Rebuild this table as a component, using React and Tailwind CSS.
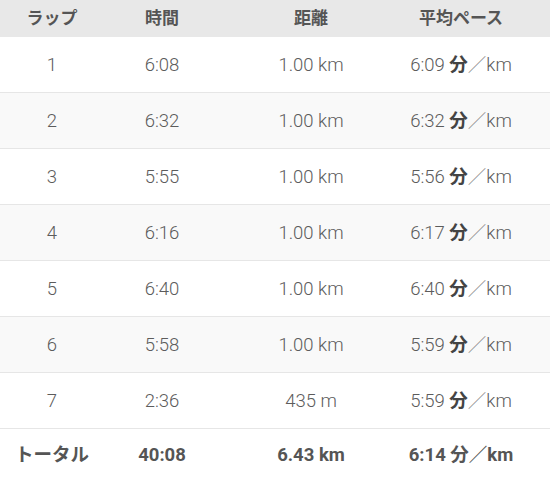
import React from "react";

const rows = [
  ["1", "6:08", "1.00 km", "6:09"],
  ["2", "6:32", "1.00 km", "6:32"],
  ["3", "5:55", "1.00 km", "5:56"],
  ["4", "6:16", "1.00 km", "6:17"],
  ["5", "6:40", "1.00 km", "6:40"],
  ["6", "5:58", "1.00 km", "5:59"],
  ["7", "2:36", "435 m", "5:59"],
];

const grid = "grid grid-cols-[104px_116px_182px_118px_1fr] items-center text-center";
const jp = { fontFamily: "Roboto, 'Noto Sans CJK JP', sans-serif" };

export default function App() {
  return (
    <div className="w-[550px] h-[480px] bg-white overflow-hidden text-[#555]" style={jp}>
      <div className={`${grid} h-[37px] bg-[#e8e8e8] font-bold text-[17px] text-[#555]`}>
        <div>ラップ</div>
        <div>時間</div>
        <div>距離</div>
        <div>平均ペース</div>
        <div />
      </div>
      {rows.map((r, i) => (
        <div
          key={i}
          className={`${grid} h-[56px] pt-[3px] border-b border-[#e6e6e6] text-[18.5px] font-light text-[#5c5c5c] ${i % 2 === 1 ? "bg-[#f9f9f9]" : "bg-white"}`}
        >
          <div>{r[0]}</div>
          <div>{r[1]}</div>
          <div>{r[2]}</div>
          <div className="whitespace-nowrap">
            {r[3]} <span className="font-bold text-[#444]">分</span>
            <span className="text-[#888]">／</span>km
          </div>
          <div />
        </div>
      ))}
      <div className={`${grid} h-[51px] pt-[2px] text-[18.5px] font-bold text-[#555]`}>
        <div>トータル</div>
        <div>40:08</div>
        <div>6.43 km</div>
        <div className="whitespace-nowrap">6:14 分／km</div>
        <div />
      </div>
    </div>
  );
}
